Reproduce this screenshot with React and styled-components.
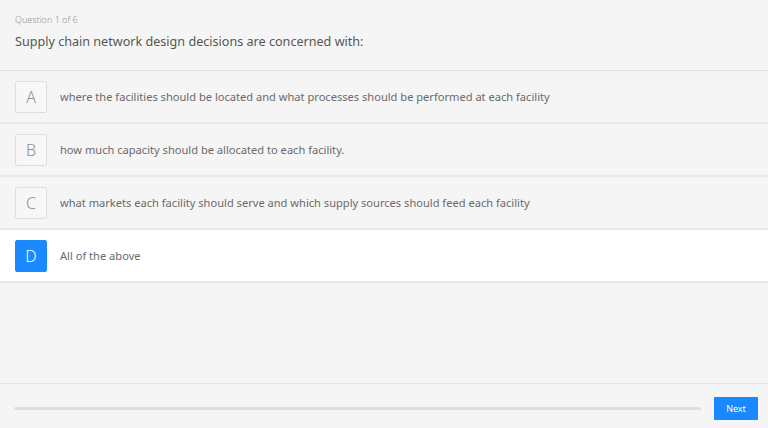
import styled, { createGlobalStyle } from "styled-components";

const GlobalStyle = createGlobalStyle`
  html, body {
    margin: 0;
    padding: 0;
    background: #f5f5f5;
  }
  body {
    font-family: "Noto Sans", "DejaVu Sans", sans-serif;
  }
`;

const Page = styled.div`
  width: 768px;
  height: 428px;
  display: flex;
  flex-direction: column;
  background: #f5f5f5;
  overflow: hidden;
`;

const Header = styled.div`
  height: 71px;
  padding: 13px 15px 0 15px;
  box-sizing: border-box;
  border-bottom: 1px solid #e3e3e3;
`;

const Counter = styled.div`
  font-size: 9px;
  color: #949494;
  font-weight: 300;
  line-height: 14px;
`;

const Prompt = styled.div`
  margin-top: 6px;
  font-size: 12.6px;
  color: #555;
  line-height: 18px;
`;

const Options = styled.div`
  display: flex;
  flex-direction: column;
`;

const Option = styled.div`
  height: 51px;
  display: flex;
  align-items: center;
  gap: 13px;
  padding: 0 15px;
  border-bottom: 2px solid #e8e8e8;
  background: ${(p) => (p.$selected ? "#ffffff" : "#f5f5f5")};
  cursor: pointer;
`;

const Letter = styled.div`
  width: 32px;
  height: 32px;
  box-sizing: border-box;
  display: flex;
  align-items: center;
  justify-content: center;
  border: 1px solid ${(p) => (p.$selected ? "#1a88ff" : "#dedede")};
  border-radius: 2px;
  background: ${(p) => (p.$selected ? "#1a88ff" : "#f7f7f7")};
  color: ${(p) => (p.$selected ? "#ffffff" : "#909090")};
  font-size: 16px;
  font-weight: 300;
`;

const OptionText = styled.div`
  font-size: 11.1px;
  color: #6a6a6a;
`;

const Spacer = styled.div`
  flex: 1;
`;

const Footer = styled.div`
  height: 45px;
  box-sizing: border-box;
  border-top: 1px solid #e6e6e6;
  display: flex;
  align-items: center;
  gap: 13px;
  padding: 4px 10px 0 14px;
`;

const Track = styled.div`
  flex: 1;
  height: 3px;
  border-radius: 2px;
  background: #dedede;
`;

const NextButton = styled.button`
  width: 44px;
  height: 23px;
  border: none;
  border-radius: 1px;
  background: #1a88ff;
  color: #ffffff;
  font-family: "Noto Sans", sans-serif;
  font-size: 9px;
  padding: 0;
  cursor: pointer;
`;

const options = [
  { key: "A", text: "where the facilities should be located and what processes should be performed at each facility" },
  { key: "B", text: "how much capacity should be allocated to each facility." },
  { key: "C", text: "what markets each facility should serve and which supply sources should feed each facility" },
  { key: "D", text: "All of the above" },
];

export default function App() {
  const selected = "D";
  return (
    <>
      <GlobalStyle />
      <Page>
        <Header>
          <Counter>Question 1 of 6</Counter>
          <Prompt>Supply chain network design decisions are concerned with:</Prompt>
        </Header>
        <Options>
          {options.map((o) => (
            <Option key={o.key} $selected={o.key === selected}>
              <Letter $selected={o.key === selected}>{o.key}</Letter>
              <OptionText>{o.text}</OptionText>
            </Option>
          ))}
        </Options>
        <Spacer />
        <Footer>
          <Track />
          <NextButton>Next</NextButton>
        </Footer>
      </Page>
    </>
  );
}
